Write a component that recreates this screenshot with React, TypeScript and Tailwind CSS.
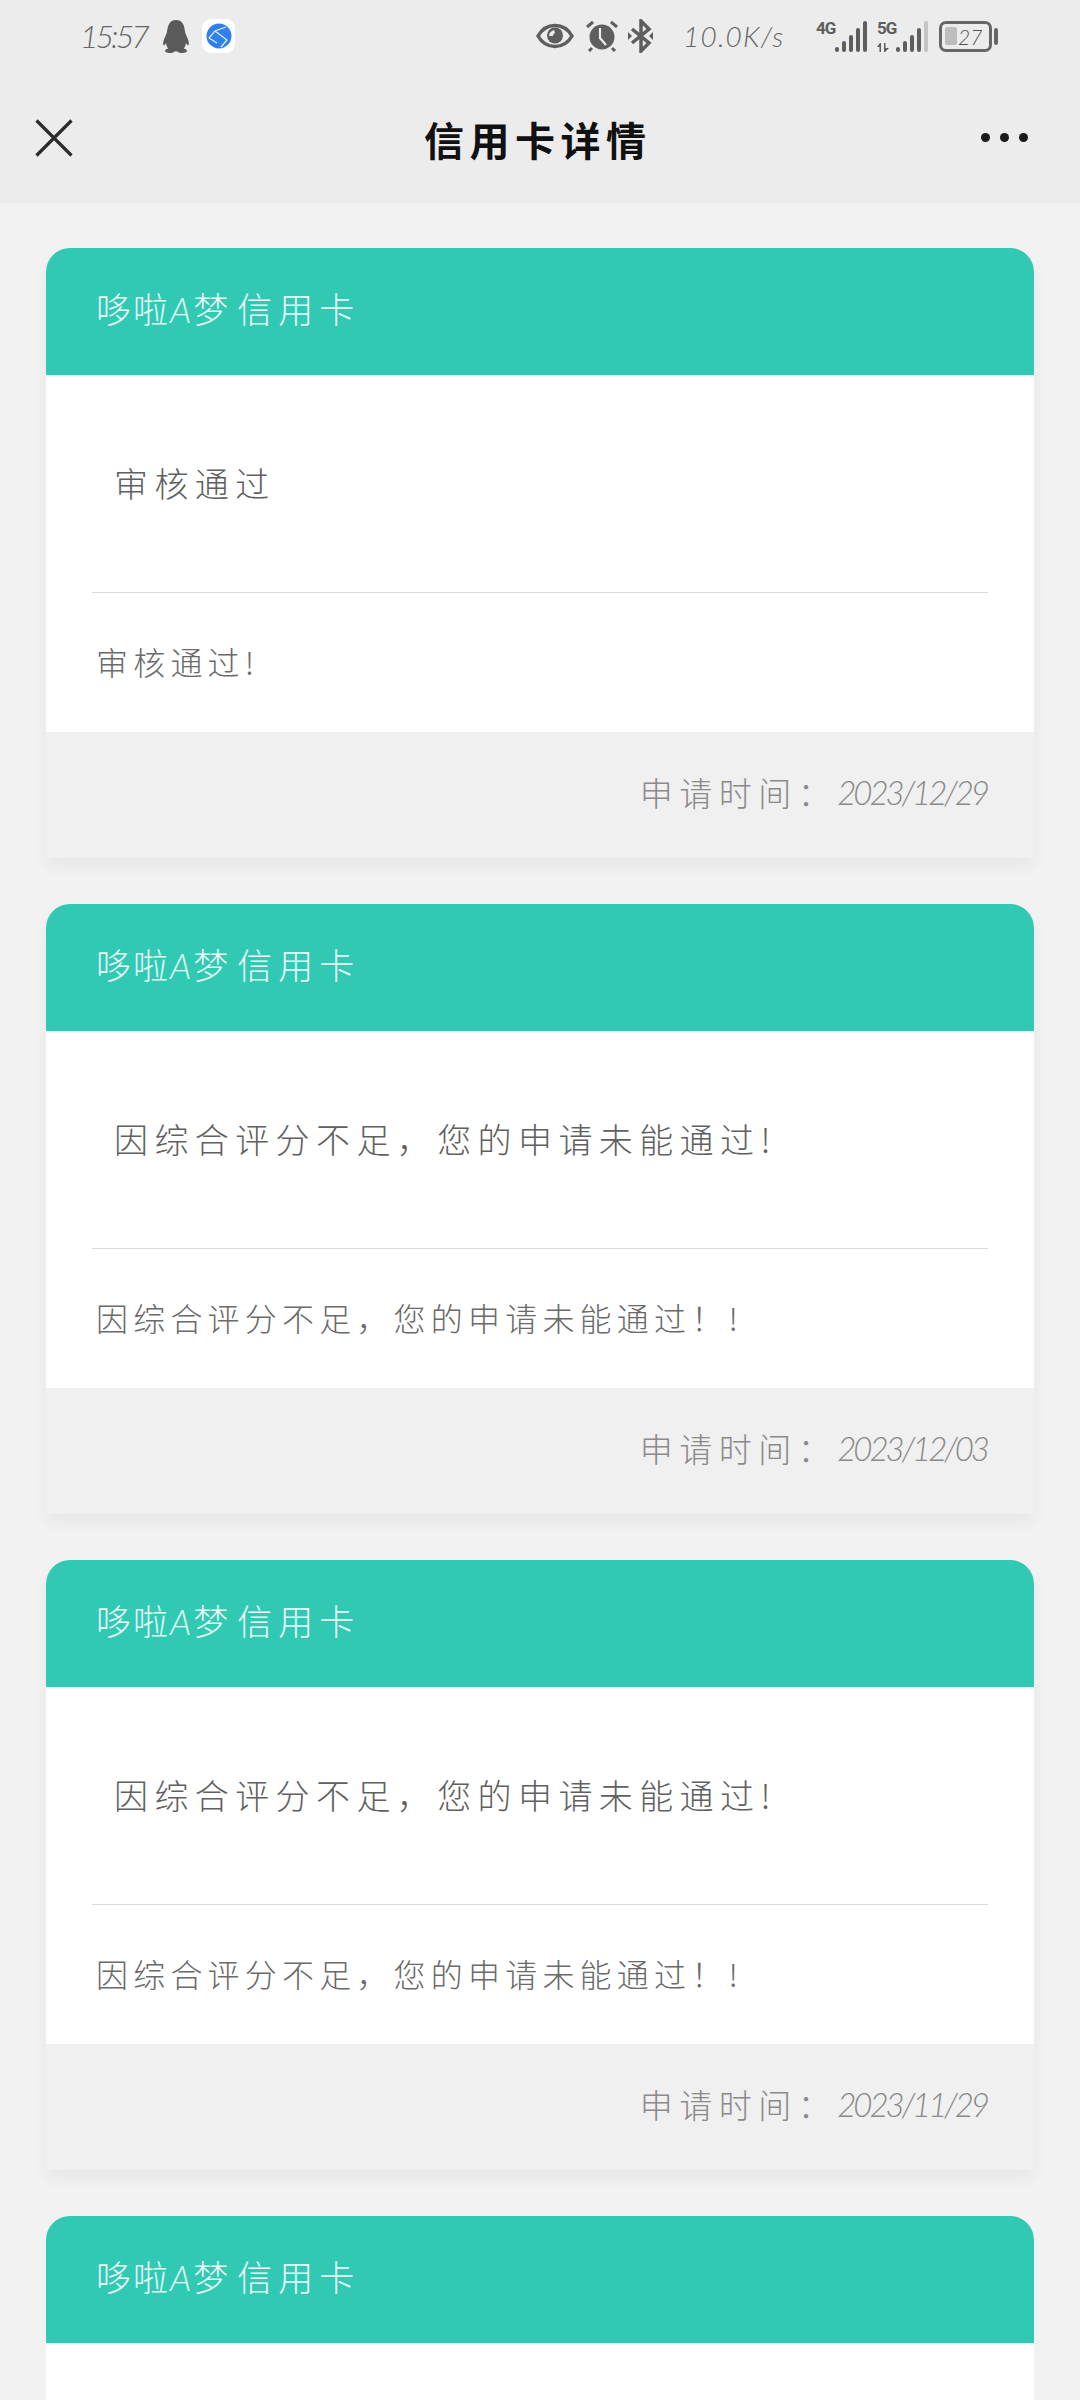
import React from 'react';

const CARDS = [
  { title: '审核通过', desc: '审核通过!', date: '2023/12/29' },
  { title: '因综合评分不足，您的申请未能通过!', desc: '因综合评分不足，您的申请未能通过！!', date: '2023/12/03' },
  { title: '因综合评分不足，您的申请未能通过!', desc: '因综合评分不足，您的申请未能通过！!', date: '2023/11/29' },
];

const Bars = ({ levels, dim }: { levels: number[]; dim?: boolean }) => (
  <div className="flex items-end gap-[3px]">
    {levels.map((h, i) => (
      <div
        key={i}
        className={`w-[4px] rounded-[2px] ${dim && i === levels.length - 1 ? 'bg-[#c4c4c4]' : 'bg-[#5e5e5e]'}`}
        style={{ height: h }}
      />
    ))}
  </div>
);

const Penguin = () => (
  <svg width="28" height="33" viewBox="0 0 28 33" className="fill-[#5a5a5a]">
    <path d="M14 0c6 0 8.500 5 8.800 10.500.2 3 2.700 7 3.700 10.500.7 2.700.3 4.500-.6 4.300-.8-.2-1.400-1-2-2.200-.2 2.200-.9 4-2 5.400 2 .6 3 1.500 3 2.600 0 1.100-1.500 1.900-4.500 1.900-2.500 0-4-.7-4.700-1.600h-3.400c-.7.900-2.200 1.600-4.700 1.600-3 0-4.500-.8-4.500-1.900 0-1.100 1-2 3-2.600-1.100-1.400-1.800-3.200-2-5.400-.6 1.200-1.200 2-2 2.200-.9.200-1.300-1.600-.6-4.300 1-3.500 3.500-7.500 3.700-10.500C6 5 8 0 14 0z" />
  </svg>
);

const BrowserIcon = () => (
  <div className="w-[33px] h-[34px] bg-white rounded-[9px] flex items-center justify-center">
    <svg width="26" height="26" viewBox="0 0 26 26">
      <circle cx="13" cy="13" r="12.500" fill="#2f80ed" />
      <path d="M3 15 L9 8 L20 4 M9 8 L21 17 L15 24 M3 15 L11 20" fill="none" stroke="#dcecff" strokeWidth="1.300" />
    </svg>
  </div>
);

const Eye = () => (
  <svg width="38" height="26" viewBox="0 0 38 26">
    <path d="M2 13C6 6 12 2.500 19 2.500S32 6 36 13C32 20 26 23.500 19 23.500S6 20 2 13z" fill="none" stroke="#5e5e5e" strokeWidth="3.500" />
    <circle cx="19" cy="12.500" r="8" fill="#5e5e5e" />
    <path d="M13 13c0-3 2-5 5-6l1 3c-1 .5-2 1-2 3z" fill="#ececec" />
  </svg>
);

const Alarm = () => (
  <svg width="34" height="32" viewBox="0 0 34 32">
    <circle cx="17" cy="17" r="12.500" fill="#5e5e5e" />
    <path d="M15 8v10l6 7" fill="none" stroke="#ececec" strokeWidth="2.200" />
    <path d="M2 7l6-5M32 7l-6-5M7 28l-3 3M27 28l3 3" fill="none" stroke="#5e5e5e" strokeWidth="3" />
  </svg>
);

const Bluetooth = () => (
  <svg width="25" height="34" viewBox="0 0 25 34">
    <path d="M4 10l17 14-8 8V2l8 8L4 24" fill="none" stroke="#5e5e5e" strokeWidth="3.500" />
    <path d="M0 13l4 4-4 4zM25 13l-4 4 4 4z" fill="#5e5e5e" />
  </svg>
);

const DataArrows = () => (
  <svg width="15" height="9" viewBox="0 0 15 9" className="fill-[#5e5e5e]">
    <path d="M0 4l3-4h1v9H2.500V4zM7 0h1.500v5H12l-4 4H7z" />
  </svg>
);

const CloseIcon = () => (
  <svg width="38" height="38" viewBox="0 0 38 38">
    <path d="M1.500 1.500l35 35M36.500 1.500l-35 35" stroke="#2c2c2c" strokeWidth="3.200" fill="none" />
  </svg>
);

const StatusBar = () => (
  <div className="h-[72px] flex items-center pl-[80px] text-[#666]">
    <span className="w-[71px] text-[32px] italic font-light tracking-[-3px] font-['Lato',sans-serif]">15:57</span>
    <div className="ml-[11px]"><Penguin /></div>
    <div className="ml-[12px]"><BrowserIcon /></div>
    <div className="ml-[301px]"><Eye /></div>
    <div className="ml-[11px]"><Alarm /></div>
    <div className="ml-[9px]"><Bluetooth /></div>
    <span className="ml-[30px] w-[100px] text-[28px] italic font-light tracking-[1.200px] font-['Lato',sans-serif]">10.0K/s</span>
    <div className="ml-[33px] w-[50px] h-[31px] flex justify-between items-end">
      <span className="self-start text-[17px] leading-[15px] font-bold tracking-[-1px] text-[#5e5e5e] font-['Roboto',sans-serif]">4G</span>
      <Bars levels={[5, 11, 17, 24, 31]} />
    </div>
    <div className="ml-[11px] w-[50px] h-[31px] flex justify-between items-end">
      <div className="flex flex-col justify-between h-full">
        <span className="text-[17px] leading-[15px] font-bold tracking-[-1px] text-[#5e5e5e] font-['Roboto',sans-serif]">5G</span>
        <DataArrows />
      </div>
      <Bars levels={[5, 11, 17, 24, 31]} dim />
    </div>
    <div className="ml-[12px] w-[53px] h-[31px] border-[3px] border-[#666] rounded-[7px] flex items-center gap-[1px] px-[3px]">
      <div className="w-[12px] h-[18px] bg-[#bdbdbd] rounded-[2px] shrink-0" />
      <span className="text-[21px] leading-none italic font-light text-[#555] font-['Lato',sans-serif]">27</span>
    </div>
    <div className="ml-[2px] w-[4px] h-[17px] rounded-[2px] bg-[#666]" />
  </div>
);

const NavBar = () => (
  <div className="h-[131px] flex items-start pt-[47px] pl-[35px]">
    <CloseIcon />
    <h1 className="ml-[351px] w-[232px] -mt-[3px] whitespace-nowrap text-[40px] leading-[46px] font-bold tracking-[5.500px] text-[#111] font-['Noto_Sans_CJK_SC',sans-serif]">信用卡详情</h1>
    <div className="ml-[325px] mt-[14px] flex gap-[10px]">
      <div className="w-[9px] h-[9px] rounded-full bg-[#1a1a1a]" />
      <div className="w-[9px] h-[9px] rounded-full bg-[#1a1a1a]" />
      <div className="w-[9px] h-[9px] rounded-full bg-[#1a1a1a]" />
    </div>
  </div>
);

const CardHead = () => (
  <div className="h-[127px] bg-[#31c9b3] rounded-t-[24px] pl-[50px] pt-[36px] text-[35px] leading-[48px] tracking-[2px] font-light text-[#e6fbf7]">
    哆啦<span className="italic font-['Lato',sans-serif]">A</span>梦<span className="ml-[7px] tracking-[6px]">信用卡</span>
  </div>
);

const Card = ({ title, desc, date }: { title: string; desc: string; date: string }) => (
  <div className="bg-white rounded-t-[24px] shadow-[0_8px_16px_rgba(0,0,0,0.05)] shrink-0">
    <CardHead />
    <div className="h-[217px] pl-[68px] pb-[2px] flex items-center text-[34px] tracking-[6.400px] font-light text-[#606060]">
      {title}
    </div>
    <div className="h-px mx-[46px] bg-[#d8d8d8]" />
    <div className="h-[139px] pl-[50px] pb-[4px] flex items-center text-[32px] tracking-[5.200px] font-light text-[#6a6a6a]">
      {desc}
    </div>
    <div className="h-[126px] bg-[#f0f0f0] pr-[47px] flex items-center justify-end pb-[4px] text-[33px] tracking-[6.500px] font-light text-[#8a8a8a]">
      申请时间：
      <span className="italic tracking-[-3px] font-['Lato',sans-serif]">{date}</span>
    </div>
  </div>
);

export default function App() {
  return (
    <div className="w-[1080px] h-[2400px] overflow-hidden bg-[#f2f2f2] font-['Noto_Sans_CJK_SC','Noto_Sans',sans-serif]">
      <div className="bg-[#ececec] h-[203px]">
        <StatusBar />
        <NavBar />
      </div>
      <div className="px-[46px] pt-[45px] flex flex-col gap-[46px]">
        {CARDS.map((c, i) => (
          <Card key={i} {...c} />
        ))}
        {/* fourth card runs off the bottom, only its head and a bit of body are seen */}
        <div className="bg-white rounded-t-[24px] shrink-0 h-[300px]">
          <CardHead />
        </div>
      </div>
    </div>
  );
}
